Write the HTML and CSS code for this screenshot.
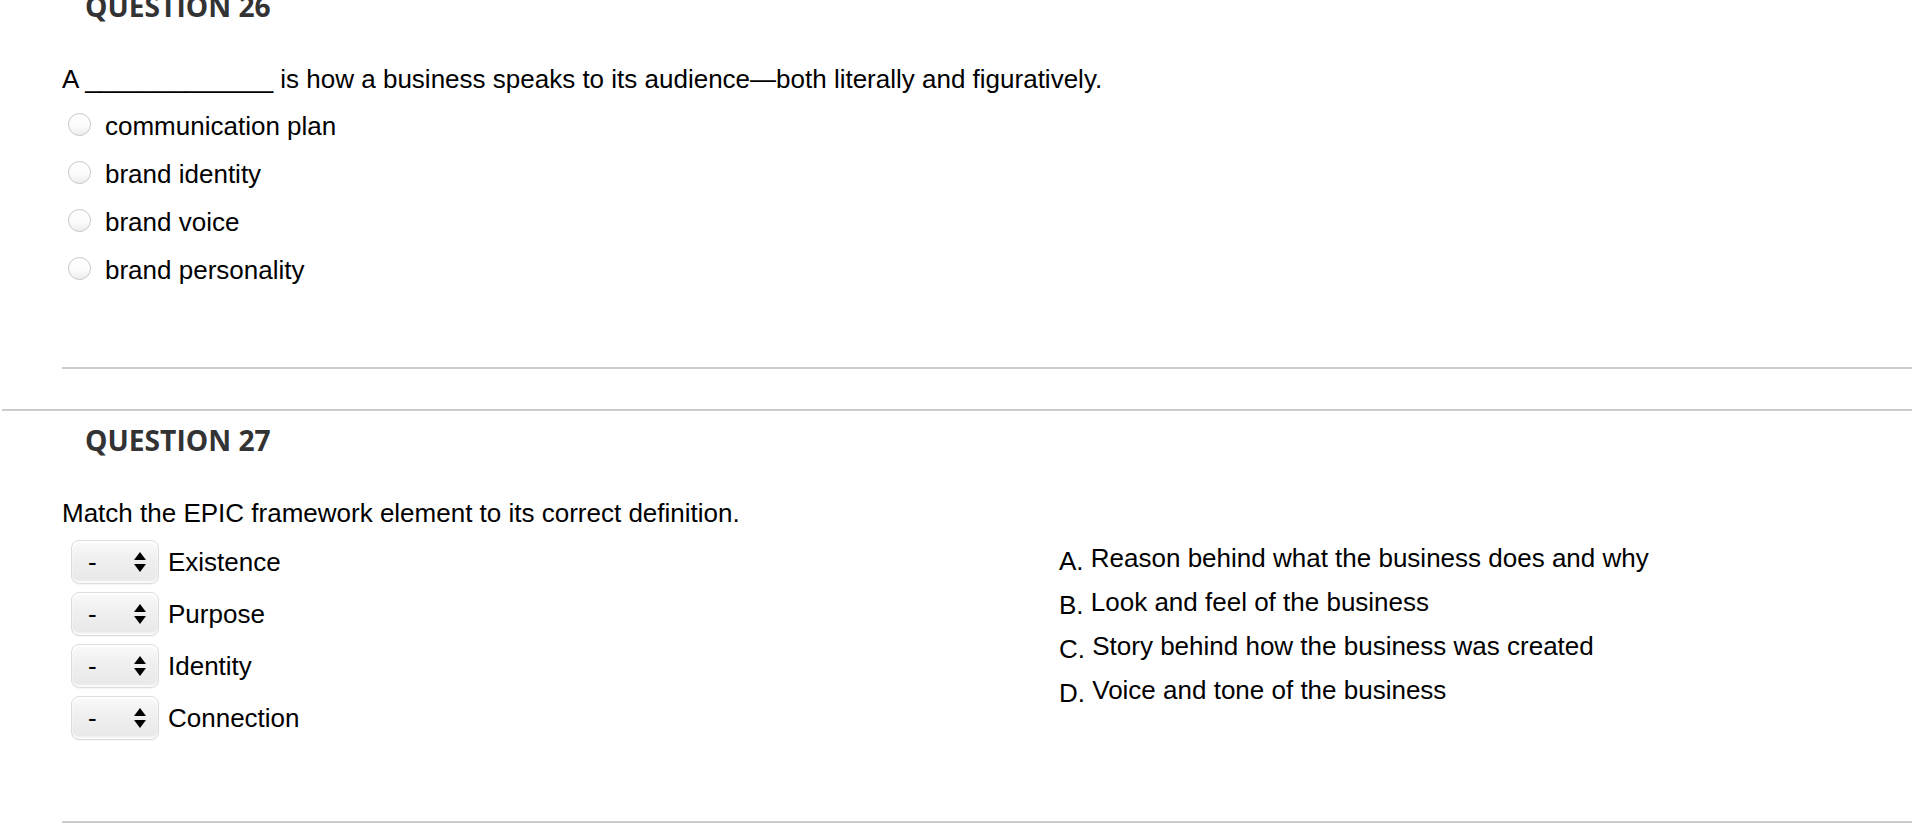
FILE: index.html
```html
<!DOCTYPE html>
<html lang="en">
<head>
<meta charset="utf-8">
<title>Questions</title>
<link rel="stylesheet" href="styles.css">
</head>
<body>
<div class="page">
  <section class="question">
    <h2 class="q-title">QUESTION 26</h2>
    <div class="q-body q-body-mc">
      <p class="prompt">A _____________ is how a business speaks to its audience—both literally and figuratively.</p>
      <ul class="options">
        <li class="option"><span class="radio"></span><span class="option-label">communication plan</span></li>
        <li class="option"><span class="radio"></span><span class="option-label">brand identity</span></li>
        <li class="option"><span class="radio"></span><span class="option-label">brand voice</span></li>
        <li class="option"><span class="radio"></span><span class="option-label">brand personality</span></li>
      </ul>
    </div>
  </section>
  <section class="question">
    <h2 class="q-title">QUESTION 27</h2>
    <div class="q-body q-body-match">
      <p class="prompt">Match the EPIC framework element to its correct definition.</p>
      <div class="match">
        <ul class="terms">
          <li class="term"><span class="select"><span class="select-value">-</span><svg class="select-arrows" width="12" height="21" viewBox="0 0 12 21"><path d="M6 0 L12 8 L0 8 Z M0 12 L12 12 L6 20 Z" fill="#000"/></svg></span><span class="term-label">Existence</span></li>
          <li class="term"><span class="select"><span class="select-value">-</span><svg class="select-arrows" width="12" height="21" viewBox="0 0 12 21"><path d="M6 0 L12 8 L0 8 Z M0 12 L12 12 L6 20 Z" fill="#000"/></svg></span><span class="term-label">Purpose</span></li>
          <li class="term"><span class="select"><span class="select-value">-</span><svg class="select-arrows" width="12" height="21" viewBox="0 0 12 21"><path d="M6 0 L12 8 L0 8 Z M0 12 L12 12 L6 20 Z" fill="#000"/></svg></span><span class="term-label">Identity</span></li>
          <li class="term"><span class="select"><span class="select-value">-</span><svg class="select-arrows" width="12" height="21" viewBox="0 0 12 21"><path d="M6 0 L12 8 L0 8 Z M0 12 L12 12 L6 20 Z" fill="#000"/></svg></span><span class="term-label">Connection</span></li>
        </ul>
        <ul class="defs">
          <li class="def"><span class="def-letter">A.</span> Reason behind what the business does and why</li>
          <li class="def"><span class="def-letter">B.</span> Look and feel of the business</li>
          <li class="def"><span class="def-letter">C.</span> Story behind how the business was created</li>
          <li class="def"><span class="def-letter">D.</span> Voice and tone of the business</li>
        </ul>
      </div>
    </div>
  </section>
</div>
</body>
</html>
```

FILE: styles.css
```css
html, body {
  margin: 0;
  padding: 0;
  background: #fff;
}

body {
  color: #000;
  font-family: "Liberation Sans", Arial, sans-serif;
  font-size: 26px;
  overflow: hidden;
}

.page {
  margin-top: -25px;
}

.question {
  margin-left: 2px;
  border-top: 2px solid #cccccc;
  padding-top: 9px;
}

.question + .question {
  margin-top: 40px;
}

.q-title {
  margin: 0;
  padding-left: 83px;
  font-family: "Open Sans", sans-serif;
  font-weight: 700;
  font-size: 28.2px;
  line-height: 40px;
  color: #333333;
}

.q-body {
  margin-left: 60px;
  margin-top: 38px;
  border-bottom: 2px solid #cccccc;
}

.prompt {
  margin: 0;
  line-height: 30px;
}

.q-body-mc {
  padding-bottom: 73px;
}

.options {
  list-style: none;
  margin: 8px 0 0;
  padding: 0;
}

.option {
  display: flex;
  align-items: center;
  height: 48px;
  line-height: 48px;
}

.radio {
  box-sizing: border-box;
  width: 23px;
  height: 23px;
  margin: 0 14px 4px 6px;
  border: 1px solid #c6c6c6;
  border-radius: 50%;
  background: linear-gradient(#ffffff 0%, #fbfbfb 60%, #ececec 100%);
  box-shadow: inset 0 1px 1px rgba(255, 255, 255, 0.9);
  flex: none;
}

.q-body-match {
  padding-bottom: 81px;
}

.match {
  display: grid;
  grid-template-columns: 997px 1fr;
  align-items: start;
  margin-top: 8px;
}

.terms, .defs {
  list-style: none;
  margin: 0;
  padding: 0;
}

.terms {
  padding-top: 4px;
}

.term {
  display: flex;
  align-items: center;
  height: 44px;
}

.term + .term {
  margin-top: 8px;
}

.select {
  box-sizing: border-box;
  display: flex;
  align-items: center;
  justify-content: space-between;
  width: 88px;
  height: 44px;
  margin: 0 9px 0 9px;
  padding: 0 12px 0 16px;
  border: 1px solid #dcdcdc;
  border-radius: 8px;
  background: linear-gradient(#fafafa 0%, #f0f0f0 40%, #e8e8e8 100%);
  box-shadow: inset 0 2px 1px #ffffff, inset 0 -2px 2px rgba(255, 255, 255, 0.85), 0 1px 1px rgba(0, 0, 0, 0.04);
  flex: none;
}

.select-value {
  line-height: 1;
}

.select-arrows {
  display: block;
}

.def {
  line-height: 44px;
  white-space: nowrap;
}

.def-letter {
  line-height: 1;
  vertical-align: -3px;
}
```
